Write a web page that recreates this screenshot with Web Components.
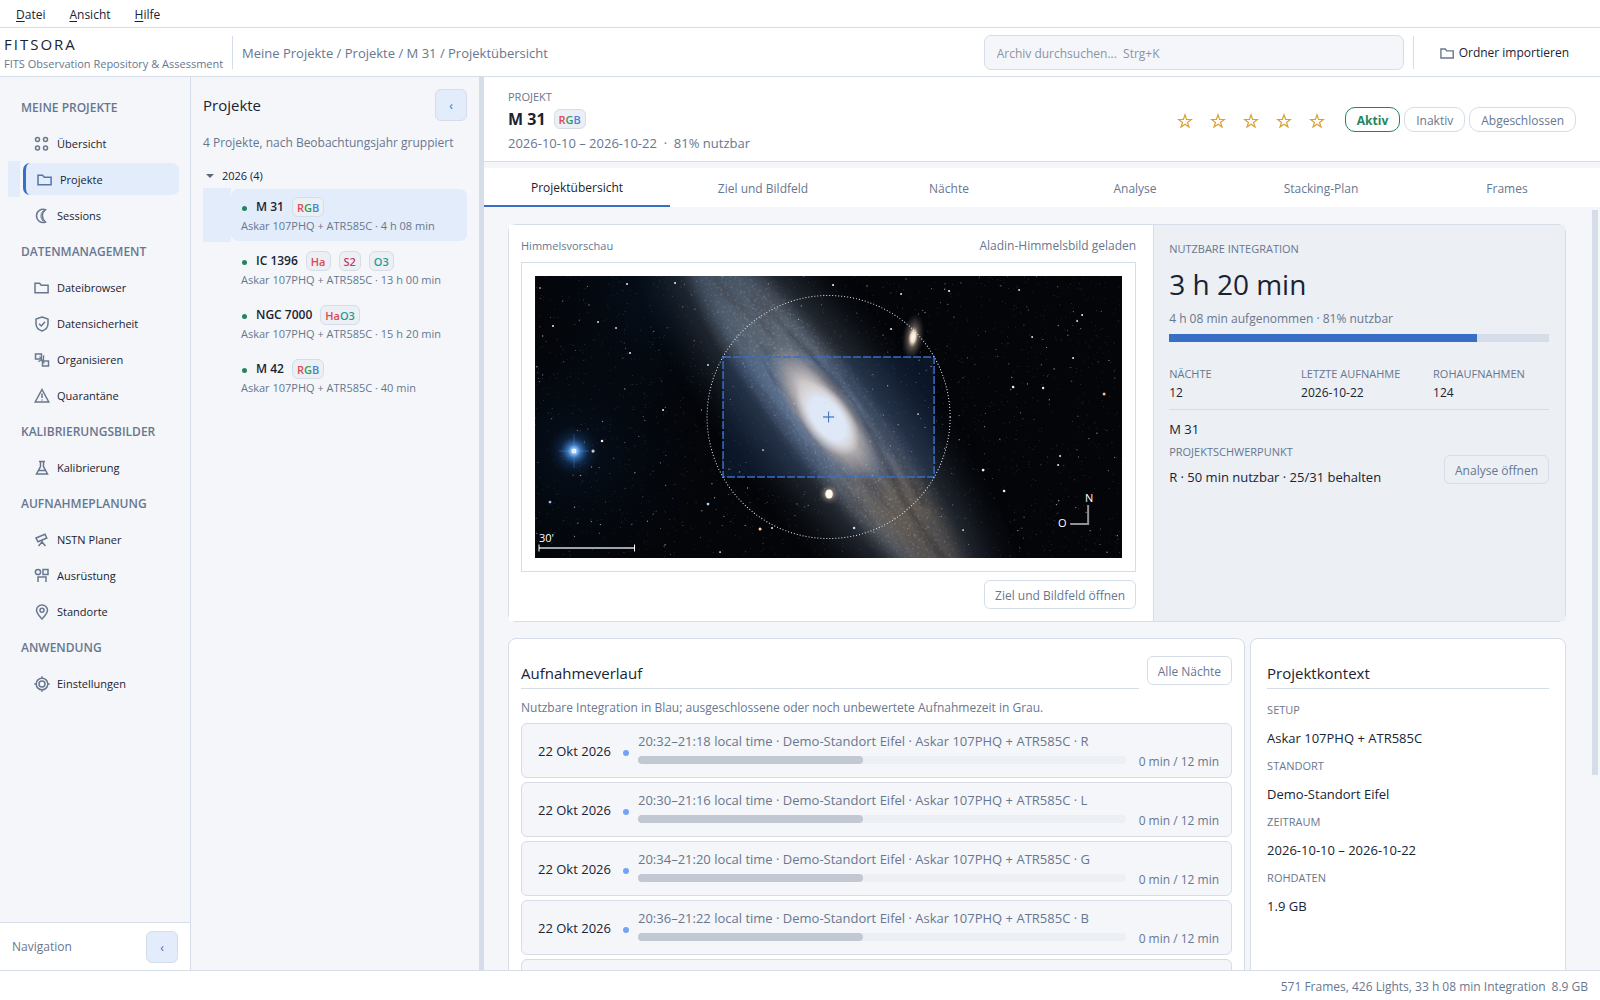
<!DOCTYPE html>
<html lang="de">
<head>
<meta charset="utf-8">
<title>FITSORA – M 31</title>
<style>
  html, body { margin: 0; height: 100%; }
  body {
    --ink: #1a2332; --muted: #68778f; --line: #d5dde8; --bg: #f4f6fa; --panel: #eceff4;
    --sel: #e3ecfa; --accent: #386ec6; --green: #24855c; --white: #fff;
    --fs: 12px; --fs-s: 11px; --fs-m: 13px; --fs-l: 15px;
    font-family: "Open Sans", "Noto Sans", sans-serif; font-size: 12px; line-height: 18px;
    color: var(--ink); background: var(--white); overflow: hidden;
  }
</style>
</head>
<body>
<fits-app></fits-app>
<script>
const BASE = `*{box-sizing:border-box} button,input{font:inherit;color:inherit;margin:0} h1,h2,p,dl,dd,ul{margin:0;padding:0;font:inherit} a{color:inherit;text-decoration:none}`;
function define(name, css, html) {
  customElements.define(name, class extends HTMLElement {
    constructor() { super(); this.attachShadow({ mode: 'open' }); }
    connectedCallback() {
      const body = typeof html === 'function' ? html(this) : html;
      this.shadowRoot.innerHTML = `<style>${BASE}${css}</style>${body}`;
    }
  });
}

const ICONS = {
  grid: '<circle cx="3.5" cy="3.5" r="2"/><circle cx="11.5" cy="3.5" r="2"/><circle cx="3.5" cy="12" r="2"/><circle cx="11.5" cy="12" r="2"/>',
  folder: '<path d="M1 12.8V3.2h4.6l1.6 2h6.9v7.6z"/>',
  moon: '<path d="M11.500 1.700A6.600 6.600 0 1 0 11.500 14A7.600 7.600 0 0 1 11.500 1.700z"/><path d="M9 3A7 7 0 0 0 9 13" stroke-width="1"/>',
  shield: '<path d="M8 1L14 3v4.500C14 11 11.500 13.800 8 15C4.500 13.800 2 11 2 7.500V3z"/><path d="M5 7.800L7.300 10L11 5.800"/>',
  organize: '<path d="M1.500 2h6v5h-6zM8.500 9h6v5h-6z"/><path d="M5.500 4.500L10.500 11.500M10.500 4h-1v5M5 10v-1l5-1" stroke-width="1.200"/>',
  warn: '<path d="M8 1.500L14.800 14H1.200z"/><path d="M8 5.500v4.500M8 11.500v1"/>',
  flask: '<path d="M5 1.500h6M6.500 1.500v5L2.500 14h11L9.500 6.500v-5M4.500 10.500h7"/>',
  scope: '<path d="M2 6L11 2.200L12.800 6L4 9.800z"/><path d="M8 8v3M8 10l-3.500 4M8 10l3.500 4"/>',
  gear: '<circle cx="4" cy="4" r="2.600"/><path d="M9 1.500h5v5H9zM4 14V9h8v5"/>',
  pin: '<path d="M8 15C5 11.500 2.500 9.200 2.500 6.200a5.500 5.200 0 0 1 11 0C13.500 9.200 11 11.500 8 15z"/><circle cx="8" cy="6.300" r="2"/>',
  target: '<circle cx="8" cy="8" r="5.800"/><circle cx="8" cy="8" r="3"/><path d="M8 .3v2M8 13.700v2M.3 8h2M13.700 8h2"/>'
};
define('ui-icon', `:host{display:block;width:16px;height:16px;flex:none;color:var(--muted)}svg{display:block;width:100%;height:100%}`,
  el => `<svg viewBox="0 0 16 16" fill="none" stroke="currentColor" stroke-width="1.500" aria-hidden="true">${ICONS[el.getAttribute('name')]}</svg>`);

define('menu-bar', `:host{display:flex;height:28px;align-items:center;gap:24px;padding:2px 16px 0;border-bottom:1px solid var(--line)}
  button{border:0;background:none;padding:0;font-size:var(--fs)}u{text-underline-offset:2px}`,
  `<button><u>D</u>atei</button><button><u>A</u>nsicht</button><button><u>H</u>ilfe</button>`);

define('app-header', `:host{display:flex;height:49px;align-items:center;border-bottom:1px solid var(--line);padding:0 31px 0 4px}
  .brand{width:228px;padding-top:4px}.name{font-size:var(--fs-l);line-height:20px;letter-spacing:2px}.tag{font-size:var(--fs-s);line-height:20px;color:var(--muted);white-space:nowrap}
  .sep{width:1px;height:33px;background:var(--line)}nav{flex:1;padding:2px 0 0 9px;color:var(--muted);font-size:var(--fs-m);font-weight:500}
  input{width:420px;height:35px;border:1px solid var(--line);border-radius:7px;background:var(--bg);padding:2px 12px 0;margin-right:9px}
  input::placeholder{color:#8b94a3;opacity:1}
  .imp{display:flex;align-items:center;gap:4px;border:0;background:none;padding:2px 0 0 26px;font-size:var(--fs)}.imp ui-icon{width:15px;height:15px}`,
  `<div class="brand"><div class="name">FITSORA</div><div class="tag">FITS Observation Repository &amp; Assessment</div></div>
   <div class="sep"></div><nav aria-label="Pfad">Meine Projekte / Projekte / M 31 / Projektübersicht</nav>
   <input type="search" aria-label="Archiv durchsuchen" placeholder="Archiv durchsuchen...&nbsp; Strg+K">
   <div class="sep"></div><button class="imp"><ui-icon name="folder"></ui-icon>Ordner importieren</button>`);

define('nav-section', `:host{display:block}h2{height:36px;line-height:38px;padding-left:21px;font-size:var(--fs);font-weight:600;color:var(--muted)}`,
  el => `<h2>${el.getAttribute('label')}</h2><slot></slot>`);
define('nav-item', `:host{display:flex;height:36px;align-items:center;gap:3px;padding:0 11px 0 8px;font-size:var(--fs-s)}
  i{width:12px;height:36px}a{flex:1;height:32px;display:flex;align-items:center;gap:7px;padding:2px 0 0 11px;border-radius:7px}
  :host([selected]) i,:host([selected]) a{background:var(--sel)}:host([selected]) a{border-left:3px solid var(--accent)}:host([selected]) ui-icon{color:#5476a8}`,
  el => `<i></i><a href="#"><ui-icon name="${el.getAttribute('icon')}"></ui-icon><slot></slot></a>`);
define('fold-button', `:host{display:block}button{width:32px;height:32px;border:1px solid var(--line);border-radius:6px;background:var(--sel);color:var(--accent);padding:2px 0 0;display:block}`,
  el => `<button aria-label="${el.getAttribute('label')}">‹</button>`);
define('side-nav', `:host{display:flex;flex-direction:column;width:191px;background:var(--bg);border-right:1px solid var(--line);padding-top:12px}
  nav{flex:1;min-height:0;overflow:hidden}.foot{height:48px;background:var(--white);border-top:1px solid var(--line);display:flex;align-items:center;justify-content:space-between;padding:0 12px;color:var(--muted)}`,
  `<nav><nav-section label="MEINE PROJEKTE"><nav-item icon="grid">Übersicht</nav-item><nav-item icon="folder" selected>Projekte</nav-item><nav-item icon="moon">Sessions</nav-item></nav-section>
   <nav-section label="DATENMANAGEMENT"><nav-item icon="folder">Dateibrowser</nav-item><nav-item icon="shield">Datensicherheit</nav-item><nav-item icon="organize">Organisieren</nav-item><nav-item icon="warn">Quarantäne</nav-item></nav-section>
   <nav-section label="KALIBRIERUNGSBILDER"><nav-item icon="flask">Kalibrierung</nav-item></nav-section>
   <nav-section label="AUFNAHMEPLANUNG"><nav-item icon="scope">NSTN Planer</nav-item><nav-item icon="gear">Ausrüstung</nav-item><nav-item icon="pin">Standorte</nav-item></nav-section>
   <nav-section label="ANWENDUNG"><nav-item icon="target">Einstellungen</nav-item></nav-section></nav>
   <div class="foot"><span>Navigation</span><fold-button label="Navigation einklappen"></fold-button></div>`);

const TINT = { R: '#dc4a55', G: '#2f9a5c', B: '#4880e0', Ha: '#dc4a55', S2: '#c43c68', O3: '#1f9e98' };
define('filter-badge', `:host{display:inline-flex;height:20px;align-items:center;justify-content:center;padding:1px 4px 0;border:1px solid var(--line);border-radius:6px;background:var(--panel);font-size:var(--fs-s);line-height:16px;font-weight:600}`,
  el => el.getAttribute('filters').split(' ').map(f => `<span style="color:${TINT[f]}">${f}</span>`).join(''));
define('project-entry', `:host{display:flex;height:54px;align-items:center}i{width:28px;height:54px}
  a{flex:1;height:52px;border-radius:7px;padding:8px 0 0 10px}:host([selected]) i,:host([selected]) a{background:var(--sel)}
  .t{display:flex;height:20px;align-items:center;gap:8px;font-weight:600;font-size:var(--fs)}.t::before{content:"";width:5px;height:5px;border-radius:50%;background:var(--green);margin:2px 1px 0 1px}
  .s{font-size:var(--fs-s);line-height:17px;color:var(--muted);white-space:nowrap}`,
  el => `<i></i><a href="#"><div class="t">${el.getAttribute('name')}${el.getAttribute('sets').split(',').map(s => `<filter-badge filters="${s}"></filter-badge>`).join('')}</div><div class="s"><slot></slot></div></a>`);
define('project-panel', `:host{display:block;width:288px;background:var(--bg);padding:12px}
  header{display:flex;justify-content:space-between;align-items:center;height:32px}h2{font-size:var(--fs-l);font-weight:500}
  p{margin:13px 0 15px;color:var(--muted);white-space:nowrap}.y{display:flex;align-items:center;gap:8px;height:18px;margin-bottom:3px;padding-left:3px;font-size:var(--fs-s)}
  .y::before{content:"";border:4px solid transparent;border-top-color:#5d6878;border-bottom:0}`,
  `<header><h2>Projekte</h2><fold-button label="Projektliste einklappen"></fold-button></header><p>4 Projekte, nach Beobachtungsjahr gruppiert</p>
   <div class="y">2026 (4)</div>
   <project-entry selected name="M 31" sets="R G B">Askar 107PHQ + ATR585C · 4 h 08 min</project-entry>
   <project-entry name="IC 1396" sets="Ha,S2,O3">Askar 107PHQ + ATR585C · 13 h 00 min</project-entry>
   <project-entry name="NGC 7000" sets="Ha O3">Askar 107PHQ + ATR585C · 15 h 20 min</project-entry>
   <project-entry name="M 42" sets="R G B">Askar 107PHQ + ATR585C · 40 min</project-entry>`);

define('state-pill', `:host{display:block}button{height:25px;padding:3px 11px 0;border:1px solid var(--line);border-radius:10px;background:var(--white);color:var(--muted);font-size:var(--fs)}
  :host([on]) button{color:var(--green);border-color:var(--green);font-weight:700}`,
  el => `<button aria-pressed="${el.hasAttribute('on')}"><slot></slot></button>`);
define('star-rating', `:host{display:flex;gap:17px;margin-top:4px}button{width:16px;height:18px;border:0;padding:0;background:none;color:#d9a12f}svg{display:block;width:16px;height:18px}`,
  () => [1, 2, 3, 4, 5].map(n => `<button aria-label="${n} von 5"><svg viewBox="0 0 16 18" fill="none" stroke="currentColor" stroke-width="1.200"><path d="M8 2.800L9.600 7.500H14.400L10.500 10.400L12 15L8 12.200L4 15L5.500 10.400L1.600 7.500H6.400z"/></svg></button>`).join(''));
define('project-header', `:host{display:flex;height:85px;align-items:center;padding:0 24px;background:var(--white);border-bottom:1px solid var(--line)}
  .l{flex:1;margin-top:2px}.k{font-size:var(--fs-s);line-height:20px;color:var(--muted)}h1{display:flex;align-items:center;gap:8px;height:24px;font-size:16px;font-weight:700}.d{margin-top:2px;line-height:20px;font-size:var(--fs-m);color:var(--muted);white-space:pre}
  .p{display:flex;gap:4px;margin-left:20px}`,
  `<div class="l"><div class="k">PROJEKT</div><h1>M 31 <filter-badge filters="R G B"></filter-badge></h1><div class="d">2026-10-10 – 2026-10-22  ·  81% nutzbar</div></div>
   <star-rating></star-rating><div class="p"><state-pill on>Aktiv</state-pill><state-pill>Inaktiv</state-pill><state-pill>Abgeschlossen</state-pill></div>`);
define('tab-bar', `:host{display:grid;grid-auto-flow:column;grid-auto-columns:1fr;height:39px;margin-top:6px;background:var(--white)}
  button{border:0;border-bottom:2px solid transparent;background:none;padding:4px 0 0;color:var(--muted);font-size:var(--fs)}button[aria-selected=true]{color:var(--ink);border-color:var(--accent);padding:2px 0 0}`,
  `<button role="tab" aria-selected="true">Projektübersicht</button>` + ['Ziel und Bildfeld', 'Nächte', 'Analyse', 'Stacking-Plan', 'Frames'].map(t => `<button role="tab">${t}</button>`).join(''));

define('soft-button', `:host{display:block;flex:none}button{height:29px;padding:2px 10px 0;border:1px solid var(--line);border-radius:6px;background:transparent;color:var(--muted);font-size:var(--fs);display:block}`,
  `<button><slot></slot></button>`);

function starField() {
  let seed = 31, out = '';
  const rnd = () => (seed = (seed * 16807) % 2147483647) / 2147483647;
  for (let n = 0; n < 1900; n++) {
    const x = (rnd() * 587).toFixed(1), y = (rnd() * 282).toFixed(1), m = Math.pow(rnd(), 9), hue = rnd();
    out += `<circle cx="${x}" cy="${y}" r="${(0.4 + m * 0.3).toFixed(2)}" fill="${hue < .2 ? '#9fc4ee' : hue < .4 ? '#e8cfae' : '#dfe2e8'}" opacity="${(0.32 + m * 0.4).toFixed(2)}"/>`;
  }
  const bright = [[92, 8, 1], [140, 7, 1], [5, 12, .8], [63, 46, .9], [18, 50, 1], [81, 52, .9], [95, 77, 1], [173, 89, .9], [128, 134, 1], [67, 165, 1.3], [58, 175, 1.6], [173, 228, 1.4], [15, 226, 1.4], [225, 253, 1.5], [237, 252, 1], [319, 252, 1.3], [298, 9, 1.1], [414, 15, 1.1], [366, 18, 1], [484, 14, .9], [547, 39, 1], [542, 45, .9], [356, 53, 1], [538, 82, 1], [497, 61, .9], [478, 111, 1.3], [508, 112, 1.2], [569, 118, 1.5], [448, 194, 1.4], [469, 215, 1.3], [523, 189, 1], [525, 180, 1], [383, 138, .9], [228, 174, .9], [185, 276, .9], [428, 254, .9]];
  const tone = { '173,228': '#a4d4ff', '15,226': '#8ebcff', '225,253': '#ffd2a0', '569,118': '#ffb98a', '319,252': '#b5e0ff' };
  return out + bright.map(([x, y, r]) => `<circle cx="${x}" cy="${y}" r="${r}" fill="${tone[x + ',' + y] || '#f3efe8'}"/>`).join('');
}
define('sky-view', `:host{display:block;border:1px solid var(--line);padding:13px}svg{display:block;width:100%;height:auto}text{font-size:11px;fill:#fff}`,
  () => `<svg viewBox="0 0 587 282" role="img" aria-label="Himmelsbild mit Bildfeld">
  <defs>
    <filter id="b3" x="-50%" y="-50%" width="200%" height="200%"><feGaussianBlur stdDeviation="2"/></filter>
    <filter id="b7" x="-50%" y="-50%" width="200%" height="200%"><feGaussianBlur stdDeviation="8"/></filter>
    <filter id="b16" x="-50%" y="-80%" width="200%" height="260%"><feGaussianBlur stdDeviation="19"/></filter>
    <filter id="dust" x="0" y="0" width="100%" height="100%"><feTurbulence type="fractalNoise" baseFrequency=".02 .09" numOctaves="5" seed="8"/><feColorMatrix values="0 0 0 0 .06  0 0 0 0 .06  0 0 0 0 .08  4 0 0 0 -1.900"/></filter>
    <filter id="grain" x="0" y="0" width="100%" height="100%"><feTurbulence type="fractalNoise" baseFrequency=".4" numOctaves="3" seed="3"/><feColorMatrix values="0 0 0 0 .72  0 0 0 0 .8  0 0 0 0 .9  5 0 0 0 -2.700"/></filter>
    <radialGradient id="blue"><stop offset="0" stop-color="#fff"/><stop offset=".08" stop-color="#a8d4ff"/><stop offset=".25" stop-color="#3f82d0" stop-opacity=".85"/><stop offset=".55" stop-color="#1c4784" stop-opacity=".35"/><stop offset="1" stop-color="#0a2346" stop-opacity="0"/></radialGradient>
    <radialGradient id="halo"><stop offset="0" stop-color="#12365f" stop-opacity=".55"/><stop offset="1" stop-color="#071428" stop-opacity="0"/></radialGradient>
    <radialGradient id="disk"><stop offset="0" stop-color="#fff"/><stop offset=".7" stop-color="#fff" stop-opacity=".8"/><stop offset="1" stop-color="#fff" stop-opacity="0"/></radialGradient>
    <radialGradient id="bulge"><stop offset="0" stop-color="#fff2e6"/><stop offset=".45" stop-color="#f2dfce" stop-opacity=".95"/><stop offset=".7" stop-color="#d3bba6" stop-opacity=".6"/><stop offset="1" stop-color="#a89a8e" stop-opacity="0"/></radialGradient>
    <radialGradient id="core"><stop offset="0" stop-color="#fff"/><stop offset=".55" stop-color="#fff"/><stop offset="1" stop-color="#fff2e6" stop-opacity="0"/></radialGradient>
    <radialGradient id="comp"><stop offset="0" stop-color="#fff"/><stop offset=".22" stop-color="#f4dfc8"/><stop offset=".45" stop-color="#9d8a7d" stop-opacity=".55"/><stop offset="1" stop-color="#4a4650" stop-opacity="0"/></radialGradient>
    <linearGradient id="arm"><stop offset="0" stop-color="#33495c"/><stop offset=".22" stop-color="#626e7c"/><stop offset=".5" stop-color="#8590a2"/><stop offset=".75" stop-color="#746a60"/><stop offset="1" stop-color="#5a554c"/></linearGradient>
    <mask id="m"><ellipse cx="0" cy="0" rx="240" ry="54" fill="url(#disk)"/></mask>
    <clipPath id="c"><path d="M0 0h588v283H0z"/></clipPath>
  </defs>
  <g clip-path="url(#c)">
    <path d="M0 0h588v283H0z" fill="#030509"/>
    <circle cx="40" cy="175" r="130" fill="url(#halo)" opacity=".4"/>
    <circle cx="120" cy="20" r="130" fill="url(#halo)" opacity=".4"/>
    <g transform="translate(291 139) rotate(53)">
      <ellipse rx="260" ry="68" fill="#39404c" opacity=".72" filter="url(#b16)"/>
      <ellipse rx="225" ry="38" fill="url(#arm)" opacity=".78" filter="url(#b7)"/>
      <path d="M-200 16Q-70 44 60 32T210 16" fill="none" stroke="#6c87a8" stroke-width="12" opacity=".3" filter="url(#b7)"/>
      <g mask="url(#m)"><path d="M-250 -55h500v110h-500z" filter="url(#dust)" opacity=".55"/><path d="M-250 -55h500v110h-500z" filter="url(#grain)" opacity=".18"/></g>
      <path d="M-90 -20Q10 -33 70 -19T190 -8M-20 -37Q50 -38 130 -24" fill="none" stroke="#14161d" stroke-width="3" opacity=".5" filter="url(#b3)"/>
      <ellipse cx="-2" cy="0" rx="84" ry="29" fill="url(#bulge)"/>
      <ellipse cx="4" cy="1" rx="43" ry="24" fill="url(#core)"/>
      <path d="M-50 -18Q10 -29 80 -14" fill="none" stroke="#5c4a40" stroke-width="3" opacity=".45" filter="url(#b3)"/>
    </g>
    ${starField()}
    <circle cx="39" cy="175" r="26" fill="url(#blue)"/><circle cx="39" cy="175" r="2.300" fill="#fff"/>
    <path d="M39 158v34M24 175h30" stroke="#6fb0f2" stroke-width=".7" opacity=".4"/>
    <ellipse cx="378" cy="61" rx="11" ry="24" transform="rotate(8 378 61)" fill="url(#comp)"/>
    <circle cx="294" cy="218" r="11" fill="url(#comp)"/><ellipse cx="294" cy="218" rx="3.500" ry="4.500" fill="#fffaf0"/>
    <path d="M188 81h211v120H188z" fill="#386ec6" fill-opacity=".16"/>
    <path d="M188 81h211v120H188z" fill="none" stroke="#386ec6" stroke-width="1.500" stroke-dasharray="8 2"/>
    <circle cx="293.500" cy="141" r="121.500" fill="none" stroke="#e8ecf2" stroke-dasharray="1 2"/>
    <path d="M288 141h11" stroke="#7f9fd4" stroke-width="2"/><path d="M293.500 135.500v11" stroke="#386ec6"/>
    <path d="M4 272h96" stroke="#a0a3a8" stroke-width="2"/><path d="M4 268.500v7M99.500 268.500v7" stroke="#fff"/>
    <path d="M553 229v19M535 248h19" stroke="#8f9296" stroke-width="2"/>
    <text x="4" y="266">30'</text><text x="550" y="226">N</text><text x="523" y="251">O</text>
  </g></svg>`);

define('stat-item', `:host{display:block}.k{font-size:var(--fs-s);line-height:16px;color:var(--muted);white-space:nowrap}.v{font-weight:500;margin-top:2px}`,
  el => `<div class="k">${el.getAttribute('label')}</div><div class="v"><slot></slot></div>`);
define('integration-panel', `:host{display:block;background:var(--panel);border-left:1px solid var(--line);padding:16px 16px 12px 15px}
  .k{font-size:var(--fs-s);line-height:16px;color:var(--muted)}.big{font-size:28px;line-height:40px;font-weight:500;margin-top:7px}.sub{color:var(--muted);margin:6px 0}
  .bar{height:8px;background:var(--line)}.bar div{width:81%;height:100%;background:var(--accent)}
  .st{display:grid;grid-template-columns:repeat(3,1fr);gap:16px;margin:24px 0 10px;padding-bottom:7px;border-bottom:1px solid var(--line)}
  .v{font-size:var(--fs-m);font-weight:500}.f{display:flex;justify-content:space-between;align-items:flex-end;margin-top:6px}.f .v{margin-top:8px}soft-button{margin-bottom:2px}`,
  `<div class="k">NUTZBARE INTEGRATION</div><div class="big">3 h 20 min</div><div class="sub">4 h 08 min aufgenommen · 81% nutzbar</div>
   <div class="bar" role="progressbar" aria-valuenow="81"><div></div></div>
   <div class="st"><stat-item label="NÄCHTE">12</stat-item><stat-item label="LETZTE AUFNAHME">2026-10-22</stat-item><stat-item label="ROHAUFNAHMEN">124</stat-item></div>
   <div class="v">M 31</div><div class="f"><div><div class="k">PROJEKTSCHWERPUNKT</div><div class="v">R · 50 min nutzbar · 25/31 behalten</div></div><soft-button>Analyse öffnen</soft-button></div>`);
define('overview-card', `:host{display:grid;grid-template-columns:minmax(0,61fr) minmax(0,39fr);border:1px solid var(--line);border-radius:8px}
  .sky{background:var(--white);padding:12px 17px 12px 12px}.h{display:flex;justify-content:space-between;color:var(--muted);margin-bottom:7px}.h span:first-child{font-size:var(--fs-s)}
  .b{display:flex;justify-content:flex-end;margin-top:8px}`,
  `<div class="sky"><div class="h"><span>Himmelsvorschau</span><span>Aladin-Himmelsbild geladen</span></div><sky-view></sky-view><div class="b"><soft-button>Ziel und Bildfeld öffnen</soft-button></div></div><integration-panel></integration-panel>`);

define('card-title', `:host{display:flex;gap:8px;height:33px}h2{flex:1;border-bottom:1px solid var(--line);font-size:var(--fs-l);font-weight:500;line-height:20px;padding-top:7px}`,
  el => `<h2>${el.getAttribute('label')}</h2><slot></slot>`);
define('night-row', `:host{display:flex;height:55px;border:1px solid var(--line);border-radius:6px;background:var(--bg);padding:0 12px 0 16px}
  .d{width:85px;padding-top:18px;font-size:var(--fs-m);font-weight:500;white-space:nowrap}.o{width:6px;height:6px;border-radius:50%;background:#74a3f5;margin:26px 9px 0 0}
  .m{flex:1;padding-top:8px;color:var(--muted);font-size:var(--fs-m)}.bar{height:8px;border-radius:4px;background:var(--panel);margin-top:6px}.bar div{height:100%;width:46%;border-radius:4px;background:#c1c8d2}
  .a{width:93px;padding-top:29px;color:var(--muted);text-align:right;white-space:nowrap}`,
  el => el.hasAttribute('time') ? `<div class="d">22 Okt 2026</div><div class="o"></div><div class="m">${el.getAttribute('time')} local time · Demo-Standort Eifel · Askar 107PHQ + ATR585C · ${el.getAttribute('filter')}<div class="bar"><div></div></div></div><div class="a">0 min / 12 min</div>` : '');
define('timeline-card', `:host{display:block;border:1px solid var(--line);border-radius:8px;background:var(--white);padding:17px 12px}
  p{color:var(--muted);margin:10px 0 6px}.r{display:flex;flex-direction:column;gap:4px}`,
  `<card-title label="Aufnahmeverlauf"><soft-button>Alle Nächte</soft-button></card-title><p>Nutzbare Integration in Blau; ausgeschlossene oder noch unbewertete Aufnahmezeit in Grau.</p>
   <div class="r"><night-row time="20:32–21:18" filter="R"></night-row><night-row time="20:30–21:16" filter="L"></night-row><night-row time="20:34–21:20" filter="G"></night-row><night-row time="20:36–21:22" filter="B"></night-row><night-row></night-row></div>`);
define('context-card', `:host{display:block;border:1px solid var(--line);border-radius:8px;background:var(--white);padding:17px 16px}
  dl{padding-top:7px;line-height:28px}dt{font-size:var(--fs-s);color:var(--muted)}dd{font-size:var(--fs-m);font-weight:500}`,
  `<card-title label="Projektkontext"></card-title><dl><dt>SETUP</dt><dd>Askar 107PHQ + ATR585C</dd><dt>STANDORT</dt><dd>Demo-Standort Eifel</dd><dt>ZEITRAUM</dt><dd>2026-10-10 – 2026-10-22</dd><dt>ROHDATEN</dt><dd>1.9 GB</dd></dl>`);

define('project-page', `:host{display:flex;flex-direction:column;min-width:0;min-height:0;background:var(--bg)}
  .w{flex:1;min-height:0;display:flex;padding-right:2px}.s{flex:1;min-width:0;overflow:hidden;padding:17px 26px 0 24px}
  .g{display:grid;grid-template-columns:minmax(0,7fr) minmax(0,3fr);gap:5px;margin-top:16px}.t{width:6px;height:74%;margin-top:3px;background:var(--line)}`,
  `<project-header></project-header><tab-bar role="tablist"></tab-bar><div class="w"><div class="s"><overview-card></overview-card><div class="g"><timeline-card></timeline-card><context-card></context-card></div></div><div class="t"></div></div>`);
define('status-bar', `:host{display:flex;justify-content:flex-end;align-items:center;gap:6px;height:30px;padding:2px 12px 0;border-top:1px solid var(--line);color:var(--muted);background:var(--white)}`,
  `<span>571 Frames, 426 Lights, 33 h 08 min Integration</span><span>8.9 GB</span>`);
define('fits-app', `:host{display:flex;flex-direction:column;height:100vh}main{flex:1;min-height:0;display:flex}.split{width:5px;background:var(--line)}project-page{flex:1}`,
  `<menu-bar></menu-bar><app-header></app-header><main><side-nav></side-nav><project-panel></project-panel><div class="split"></div><project-page></project-page></main><status-bar></status-bar>`);
</script>
</body>
</html>
